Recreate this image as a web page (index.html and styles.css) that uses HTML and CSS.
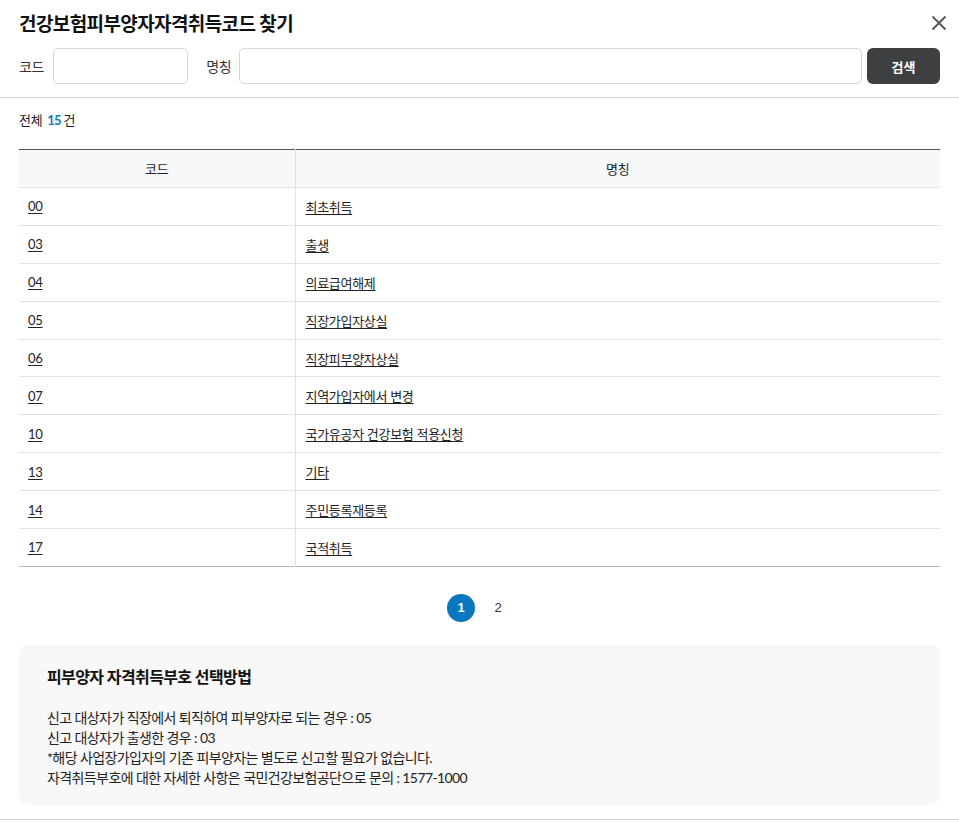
FILE: index.html
```html
<!DOCTYPE html>
<html lang="ko">
<head>
<meta charset="utf-8">
<link rel="stylesheet" href="styles.css">
</head>
<body>
<div class="popup">
  <div class="head">
    <div class="title-row">
      <h1 class="title">건강보험피부양자자격취득코드 찾기</h1>
      <button class="close" aria-label="닫기">
        <svg width="16" height="16" viewBox="0 0 16 16"><path d="M1.5 1.5 L14.5 14.5 M14.5 1.5 L1.5 14.5" stroke="#555" stroke-width="1.8" fill="none"/></svg>
      </button>
    </div>
    <div class="search">
      <label class="lbl">코드</label>
      <input class="inp inp-code" type="text">
      <label class="lbl lbl-name">명칭</label>
      <input class="inp inp-name" type="text">
      <button class="btn">검색</button>
    </div>
  </div>
  <div class="body">
    <div class="total">전체 <span class="num">15</span>건</div>
    <table class="tbl">
      <thead>
        <tr><th class="c1">코드</th><th>명칭</th></tr>
      </thead>
      <tbody>
        <tr><td class="c1"><a>00</a></td><td><a>최초취득</a></td></tr>
        <tr><td class="c1"><a>03</a></td><td><a>출생</a></td></tr>
        <tr><td class="c1"><a>04</a></td><td><a>의료급여해제</a></td></tr>
        <tr><td class="c1"><a>05</a></td><td><a>직장가입자상실</a></td></tr>
        <tr><td class="c1"><a>06</a></td><td><a>직장피부양자상실</a></td></tr>
        <tr><td class="c1"><a>07</a></td><td><a>지역가입자에서 변경</a></td></tr>
        <tr><td class="c1"><a>10</a></td><td><a>국가유공자 건강보험 적용신청</a></td></tr>
        <tr><td class="c1"><a>13</a></td><td><a>기타</a></td></tr>
        <tr><td class="c1"><a>14</a></td><td><a>주민등록재등록</a></td></tr>
        <tr><td class="c1"><a>17</a></td><td><a>국적취득</a></td></tr>
      </tbody>
    </table>
    <div class="paging">
      <span class="pg on">1</span>
      <span class="pg">2</span>
    </div>
    <div class="info">
      <h2 class="info-title">피부양자 자격취득부호 선택방법</h2>
      <p class="info-text">신고 대상자가 직장에서 퇴직하여 피부양자로 되는 경우 : 05<br>신고 대상자가 출생한 경우 : 03<br>*해당 사업장가입자의 기존 피부양자는 별도로 신고할 필요가 없습니다.<br>자격취득부호에 대한 자세한 사항은 국민건강보험공단으로 문의 : 1577-1000</p>
    </div>
  </div>
  <div class="foot-line"></div>
</div>
</body>
</html>
```
FILE: styles.css
```css
* { box-sizing: border-box; }
html, body { margin: 0; padding: 0; background: #fff; }
body {
  font-family: Lato, "Noto Sans CJK KR", sans-serif;
  color: #222;
  letter-spacing: -0.3px;
}
.popup { width: 959px; }
.head {
  padding: 8px 19px 13px 19px;
  border-bottom: 1px solid #cfcfcf;
}
.title-row {
  display: flex;
  align-items: center;
  justify-content: space-between;
  height: 28px;
}
.title {
  margin: 0;
  font-size: 19px;
  font-weight: 700;
  color: #111;
  letter-spacing: -0.6px;
}
.close {
  border: 0;
  background: none;
  padding: 0;
  width: 18px;
  height: 18px;
  display: flex;
  align-items: center;
  justify-content: center;
  margin-right: -8px;
  margin-top: 2px;
}
.search {
  display: flex;
  align-items: center;
  margin-top: 12px;
}
.lbl {
  font-size: 14px;
  color: #333;
  margin-right: 9px;
}
.lbl-name { margin-left: 18px; margin-right: 8px; }
.inp {
  height: 36px;
  border: 1px solid #d6d6d6;
  border-radius: 5px;
  background: #fff;
}
.inp-code { width: 135px; }
.inp-name { width: 623px; }
.btn {
  margin-left: 5px;
  width: 73px;
  height: 36px;
  border: 0;
  border-radius: 6px;
  background: #3e3f41;
  color: #fff;
  font-family: inherit;
  font-size: 13px;
  font-weight: 700;
}
.body { padding: 0 19px; }
.total {
  font-size: 13px;
  color: #222;
  margin-top: 13px;
  height: 18px;
  line-height: 18px;
}
.total .num { color: #1179c3; font-weight: 700; letter-spacing: -1px; margin-right: 3px; margin-left: 2px; }
.tbl {
  width: 921px;
  margin-top: 20px;
  border-collapse: collapse;
  border-top: 1px solid #555;
  border-bottom: 1px solid #b9b9c6;
  font-size: 13px;
}
.tbl th {
  height: 38px;
  background: #f7f8fa;
  font-weight: 400;
  color: #222;
  border-bottom: 1px solid #e2e2e2;
  text-align: center;
  padding: 0;
}
.tbl td {
  height: 37.9px;
  padding: 0 0 0 10px;
  border-bottom: 1px solid #e2e2e2;
  text-align: left;
}
.tbl tbody tr:last-child td { border-bottom: 0; }
.tbl .c1 { width: 276px; border-right: 1px solid #e2e2e2; }
.tbl td.c1 { padding-left: 9px; }
.tbl a { color: #222; text-decoration: underline; text-underline-offset: 2px; }
.paging {
  display: flex;
  justify-content: center;
  align-items: center;
  gap: 9px;
  margin-top: 27px;
  height: 28px;
}
.pg {
  width: 28px;
  height: 28px;
  line-height: 28px;
  text-align: center;
  font-family: "Liberation Sans", sans-serif;
  font-size: 13px;
  color: #333;
  border-radius: 50%;
}
.pg.on { background: #0877bd; color: #fff; font-weight: 700; }
.info {
  margin-top: 23px;
  background: #f8f8f8;
  border-radius: 9px;
  padding: 21px 28px 15px 28px;
  height: 160px;
}
.info-title {
  margin: 0;
  font-size: 16px;
  font-weight: 700;
  color: #111;
  letter-spacing: -0.6px;
  line-height: 22px;
}
.info-text {
  margin: 20px 0 0 0;
  font-size: 14px;
  line-height: 20px;
  color: #222;
  letter-spacing: -0.6px;
}
.foot-line {
  margin-top: 14px;
  border-top: 1px solid #cfcfcf;
}
```
